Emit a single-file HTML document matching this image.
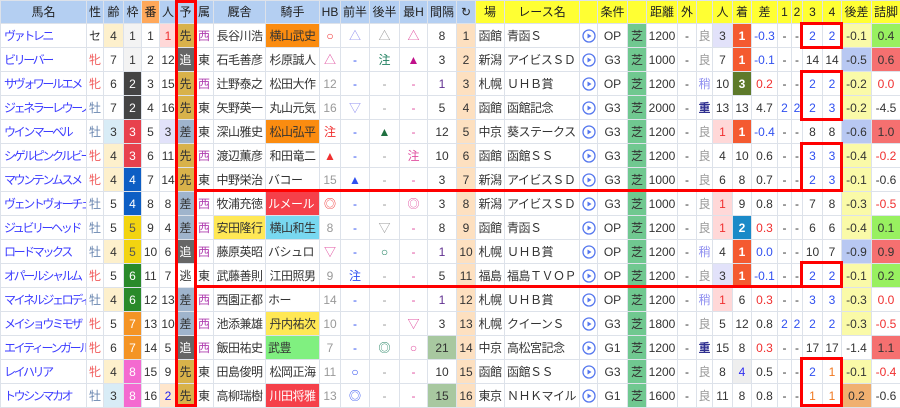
<!DOCTYPE html>
<html><head><meta charset="utf-8">
<style>
*{box-sizing:border-box;margin:0;padding:0}
body{width:900px;height:407px;overflow:hidden;background:#fff;font-family:"Liberation Sans","Noto Sans CJK JP",sans-serif;font-size:12px;color:#333;position:relative}
table{border-collapse:collapse;table-layout:fixed;width:900px}
td,th{border:1px solid #dde2ea;text-align:center;white-space:nowrap;overflow:hidden;padding:0;height:24px;line-height:22px}
th{height:23px;background:#b4cff2;font-weight:normal;color:#222}
th.y{background:#ffff33}
th.o{background:#ffa85a}
td.n{text-align:left;padding-left:3px;color:#3d3dff;letter-spacing:-2.4px}
.cj{letter-spacing:-0.5px}
.f{color:#f05a5a}.m{color:#6a86b0}
.a4{background:#fdf0cc}.a3{background:#d8ecf6}
.w1{background:#f3f3f3}.w2{background:#444;color:#fff}.w3{background:#e8414d;color:#fff}.w4{background:#0d5ec4;color:#fff}.w5{background:#f2d410;color:#555}.w6{background:#2a8a2a;color:#fff}.w7{background:#f49425;color:#fff}.w8{background:#f46ad0;color:#fff}
.p1{background:#ffd8d8;color:#f03030}.p2{background:#ffe6cc;color:#2020f0}.p3{background:#e2e2fa}
.s{background:#d8b24a}.k{background:#666;color:#fff}.z{background:#9fb4cc}
.wst{color:#b040b0}
.jo{background:#fb8c10}.jr{background:#f5404a;color:#fff}.jy{background:#ffe855}.jc{background:#78d8f0}.jg{background:#80f080}
.r{color:#f03030}.pk{color:#e050a0}.bl{color:#3050f0}.gr{color:#208060}.lv{color:#9090f0}.gy{color:#999}.pu{color:#603090}.or{color:#f07820}
.rot{background:#fde0c0}
.ic svg{vertical-align:middle}
.tu{background:#70c890}
.c1{background:#f45a30;color:#fff;font-weight:bold}.c3{background:#5e7a2a;color:#fff;font-weight:bold}.c2{background:#1a8ac8;color:#fff;font-weight:bold}.cg{background:#eee;color:#3030f0}
.ky{background:#fafaa8}.kb{background:#b8c8f2}.ko{background:#f0b070}
.tg{background:#98f060}.tr{background:#f57070}
.ig{background:#a8c8a0}
.b{position:absolute;border:3px solid #f00;pointer-events:none}
td.l{text-align:left;padding-left:2px;letter-spacing:-0.5px}
</style></head><body>
<table>
<colgroup><col style="width:86px"><col style="width:17px"><col style="width:20px"><col style="width:18px"><col style="width:18px"><col style="width:17px"><col style="width:18px"><col style="width:19px"><col style="width:52px"><col style="width:54px"><col style="width:21px"><col style="width:29px"><col style="width:30px"><col style="width:28px"><col style="width:29px"><col style="width:19px"><col style="width:29px"><col style="width:75px"><col style="width:18px"><col style="width:30px"><col style="width:19px"><col style="width:31px"><col style="width:19px"><col style="width:16px"><col style="width:20px"><col style="width:19px"><col style="width:26px"><col style="width:14px"><col style="width:11px"><col style="width:20px"><col style="width:19px"><col style="width:30px"><col style="width:29px"></colgroup>
<tr><th>馬名</th><th>性</th><th>齢</th><th>枠</th><th class="o">番</th><th>人</th><th>予</th><th>属</th><th>厩舎</th><th>騎手</th><th>HB</th><th>前半</th><th>後半</th><th>最H</th><th>間隔</th><th>↻</th><th class="y">場</th><th class="y">レース名</th><th class="y"></th><th class="y">条件</th><th class="y"></th><th class="y">距離</th><th class="y">外</th><th class="y"></th><th class="y">人</th><th class="y">着</th><th class="y">差</th><th class="y">1</th><th class="y">2</th><th class="y">3</th><th class="y">4</th><th class="y">後差</th><th class="y">詰脚</th></tr>

<tr><td class="n">ヴァトレニ</td><td>セ</td><td class="a4">4</td><td class="w1">1</td><td>1</td><td class="p1">1</td><td class="s">先</td><td class="wst">西</td><td class="cj">長谷川浩</td><td class="jo cj">横山武史</td><td class="r">○</td><td class="lv">△</td><td class="gy">△</td><td class="pk">△</td><td>8</td><td class="rot">1</td><td class="cj">函館</td><td class="l">青函Ｓ</td><td class="ic"><svg width="14" height="14"><circle cx="7" cy="7" r="6" fill="none" stroke="#5577ee" stroke-width="1.3"/><path d="M5.5 4.5L9.5 7L5.5 9.5Z" fill="#5577ee"/></svg></td><td>OP</td><td class="tu">芝</td><td>1200</td><td>-</td><td class="gy">良</td><td class="p3">3</td><td class="c1">1</td><td class="bl">-0.3</td><td>-</td><td>-</td><td class="bl">2</td><td class="bl">2</td><td class="ky">-0.1</td><td class="tg">0.4</td></tr>

<tr><td class="n">ビリーバー</td><td class="f">牝</td><td>7</td><td class="w1">1</td><td>2</td><td>12</td><td class="k">追</td><td>東</td><td class="cj">石毛善彦</td><td class="cj">杉原誠人</td><td class="pk">△</td><td class="bl">-</td><td class="gr">注</td><td style="color:#c0108a">▲</td><td>3</td><td class="rot">2</td><td class="cj">新潟</td><td class="l">アイビスＳＤ</td><td class="ic"><svg width="14" height="14"><circle cx="7" cy="7" r="6" fill="none" stroke="#5577ee" stroke-width="1.3"/><path d="M5.5 4.5L9.5 7L5.5 9.5Z" fill="#5577ee"/></svg></td><td>G3</td><td class="tu">芝</td><td>1000</td><td>-</td><td class="gy">良</td><td>7</td><td class="c1">1</td><td class="bl">-0.1</td><td>-</td><td>-</td><td>14</td><td>14</td><td class="kb">-0.5</td><td class="tr">0.6</td></tr>

<tr><td class="n">サヴォワールエメ</td><td class="f">牝</td><td>6</td><td class="w2">2</td><td>3</td><td>15</td><td class="s">先</td><td class="wst">西</td><td class="cj">辻野泰之</td><td class="cj">松田大作</td><td class="gy">12</td><td class="bl">-</td><td class="gy">-</td><td class="pk">-</td><td class="pu">1</td><td class="rot">3</td><td class="cj">札幌</td><td class="l">ＵＨＢ賞</td><td class="ic"><svg width="14" height="14"><circle cx="7" cy="7" r="6" fill="none" stroke="#5577ee" stroke-width="1.3"/><path d="M5.5 4.5L9.5 7L5.5 9.5Z" fill="#5577ee"/></svg></td><td>OP</td><td class="tu">芝</td><td>1200</td><td>-</td><td class="lv">稍</td><td>10</td><td class="c3">3</td><td class="r">0.2</td><td>-</td><td>-</td><td class="bl">2</td><td class="bl">2</td><td class="ky">-0.2</td><td class="r">0.0</td></tr>

<tr><td class="n">ジェネラーレウーノ</td><td class="m">牡</td><td>7</td><td class="w2">2</td><td>4</td><td>16</td><td class="s">先</td><td>東</td><td class="cj">矢野英一</td><td class="cj">丸山元気</td><td class="gy">16</td><td class="lv">▽</td><td class="gy">-</td><td class="pk">-</td><td>5</td><td class="rot">4</td><td class="cj">函館</td><td class="l">函館記念</td><td class="ic"><svg width="14" height="14"><circle cx="7" cy="7" r="6" fill="none" stroke="#5577ee" stroke-width="1.3"/><path d="M5.5 4.5L9.5 7L5.5 9.5Z" fill="#5577ee"/></svg></td><td>G3</td><td class="tu">芝</td><td>2000</td><td>-</td><td style="color:#303090;font-weight:bold">重</td><td>13</td><td>13</td><td>4.7</td><td class="bl">2</td><td class="bl">2</td><td class="bl">2</td><td class="bl">3</td><td class="ky">-0.2</td><td>-4.5</td></tr>

<tr><td class="n">ウインマーベル</td><td class="m">牡</td><td class="a3">3</td><td class="w3">3</td><td>5</td><td class="p3">3</td><td class="z">差</td><td>東</td><td class="cj">深山雅史</td><td class="jo cj">松山弘平</td><td class="r">注</td><td class="bl">-</td><td style="color:#207040">▲</td><td class="pk">-</td><td>12</td><td class="rot">5</td><td class="cj">中京</td><td class="l">葵ステークス</td><td class="ic"><svg width="14" height="14"><circle cx="7" cy="7" r="6" fill="none" stroke="#5577ee" stroke-width="1.3"/><path d="M5.5 4.5L9.5 7L5.5 9.5Z" fill="#5577ee"/></svg></td><td>G3</td><td class="tu">芝</td><td>1200</td><td>-</td><td class="gy">良</td><td class="p1">1</td><td class="c1">1</td><td class="bl">-0.4</td><td>-</td><td>-</td><td>8</td><td>8</td><td class="kb">-0.6</td><td class="tr">1.0</td></tr>

<tr><td class="n">シゲルピンクルビー</td><td class="f">牝</td><td class="a4">4</td><td class="w3">3</td><td>6</td><td>11</td><td class="s">先</td><td class="wst">西</td><td class="cj">渡辺薫彦</td><td class="cj">和田竜二</td><td class="r">▲</td><td class="bl">-</td><td class="gy">-</td><td class="pk">注</td><td>10</td><td class="rot">6</td><td class="cj">函館</td><td class="l">函館ＳＳ</td><td class="ic"><svg width="14" height="14"><circle cx="7" cy="7" r="6" fill="none" stroke="#5577ee" stroke-width="1.3"/><path d="M5.5 4.5L9.5 7L5.5 9.5Z" fill="#5577ee"/></svg></td><td>G3</td><td class="tu">芝</td><td>1200</td><td>-</td><td class="gy">良</td><td>4</td><td>10</td><td>0.6</td><td>-</td><td>-</td><td class="bl">3</td><td class="bl">3</td><td class="ky">-0.4</td><td class="r">-0.2</td></tr>

<tr><td class="n">マウンテンムスメ</td><td class="f">牝</td><td class="a4">4</td><td class="w4">4</td><td>7</td><td>14</td><td class="s">先</td><td>東</td><td class="cj">中野栄治</td><td class="l">バコー</td><td class="gy">15</td><td class="bl">▲</td><td class="gy">-</td><td class="pk">-</td><td>3</td><td class="rot">7</td><td class="cj">新潟</td><td class="l">アイビスＳＤ</td><td class="ic"><svg width="14" height="14"><circle cx="7" cy="7" r="6" fill="none" stroke="#5577ee" stroke-width="1.3"/><path d="M5.5 4.5L9.5 7L5.5 9.5Z" fill="#5577ee"/></svg></td><td>G3</td><td class="tu">芝</td><td>1000</td><td>-</td><td class="gy">良</td><td>6</td><td>8</td><td>0.7</td><td>-</td><td>-</td><td class="bl">2</td><td class="bl">3</td><td class="ky">-0.1</td><td>-0.6</td></tr>

<tr><td class="n">ヴェントヴォーチェ</td><td class="m">牡</td><td>5</td><td class="w4">4</td><td>8</td><td>8</td><td class="z">差</td><td class="wst">西</td><td class="cj">牧浦充徳</td><td class="jr l">ルメール</td><td class="r">◎</td><td class="bl">-</td><td class="gy">-</td><td class="pk">◎</td><td>3</td><td class="rot">8</td><td class="cj">新潟</td><td class="l">アイビスＳＤ</td><td class="ic"><svg width="14" height="14"><circle cx="7" cy="7" r="6" fill="none" stroke="#5577ee" stroke-width="1.3"/><path d="M5.5 4.5L9.5 7L5.5 9.5Z" fill="#5577ee"/></svg></td><td>G3</td><td class="tu">芝</td><td>1000</td><td>-</td><td class="gy">良</td><td class="p1">1</td><td>9</td><td>0.8</td><td>-</td><td>-</td><td>7</td><td>8</td><td class="ky">-0.3</td><td class="r">-0.5</td></tr>

<tr><td class="n">ジュビリーヘッド</td><td class="m">牡</td><td>5</td><td class="w5">5</td><td>9</td><td>4</td><td class="z">差</td><td class="wst">西</td><td class="jy cj">安田隆行</td><td class="jc cj">横山和生</td><td class="gy">8</td><td class="bl">-</td><td class="gy">▽</td><td class="pk">-</td><td>8</td><td class="rot">9</td><td class="cj">函館</td><td class="l">青函Ｓ</td><td class="ic"><svg width="14" height="14"><circle cx="7" cy="7" r="6" fill="none" stroke="#5577ee" stroke-width="1.3"/><path d="M5.5 4.5L9.5 7L5.5 9.5Z" fill="#5577ee"/></svg></td><td>OP</td><td class="tu">芝</td><td>1200</td><td>-</td><td class="gy">良</td><td class="p1">1</td><td class="c2">2</td><td class="r">0.3</td><td>-</td><td>-</td><td>6</td><td>6</td><td class="ky">-0.4</td><td class="tg">0.1</td></tr>

<tr><td class="n">ロードマックス</td><td class="m">牡</td><td class="a4">4</td><td class="w5">5</td><td>10</td><td>6</td><td class="k">追</td><td class="wst">西</td><td class="cj">藤原英昭</td><td class="l">バシュロ</td><td class="pk">▽</td><td class="bl">-</td><td class="gr">○</td><td class="pk">-</td><td class="pu">1</td><td class="rot">10</td><td class="cj">札幌</td><td class="l">ＵＨＢ賞</td><td class="ic"><svg width="14" height="14"><circle cx="7" cy="7" r="6" fill="none" stroke="#5577ee" stroke-width="1.3"/><path d="M5.5 4.5L9.5 7L5.5 9.5Z" fill="#5577ee"/></svg></td><td>OP</td><td class="tu">芝</td><td>1200</td><td>-</td><td class="lv">稍</td><td>4</td><td class="c1">1</td><td class="bl">0.0</td><td>-</td><td>-</td><td>10</td><td>7</td><td class="kb">-0.9</td><td class="tr">0.9</td></tr>

<tr><td class="n">オパールシャルム</td><td class="f">牝</td><td>5</td><td class="w6">6</td><td>11</td><td>7</td><td>逃</td><td>東</td><td class="cj">武藤善則</td><td class="cj">江田照男</td><td class="gy">9</td><td class="bl">注</td><td class="gy">-</td><td class="pk">-</td><td>5</td><td class="rot">11</td><td class="cj">福島</td><td class="l">福島ＴＶＯＰ</td><td class="ic"><svg width="14" height="14"><circle cx="7" cy="7" r="6" fill="none" stroke="#5577ee" stroke-width="1.3"/><path d="M5.5 4.5L9.5 7L5.5 9.5Z" fill="#5577ee"/></svg></td><td>OP</td><td class="tu">芝</td><td>1200</td><td>-</td><td class="gy">良</td><td class="p3">3</td><td class="c1">1</td><td class="bl">-0.1</td><td>-</td><td>-</td><td class="bl">2</td><td class="bl">2</td><td class="ky">-0.1</td><td class="tg">0.2</td></tr>

<tr><td class="n">マイネルジェロディ</td><td class="m">牡</td><td class="a4">4</td><td class="w6">6</td><td>12</td><td>13</td><td class="z">差</td><td class="wst">西</td><td class="cj">西園正都</td><td class="l">ホー</td><td class="gy">14</td><td class="bl">-</td><td class="gy">-</td><td class="pk">-</td><td class="pu">1</td><td class="rot">12</td><td class="cj">札幌</td><td class="l">ＵＨＢ賞</td><td class="ic"><svg width="14" height="14"><circle cx="7" cy="7" r="6" fill="none" stroke="#5577ee" stroke-width="1.3"/><path d="M5.5 4.5L9.5 7L5.5 9.5Z" fill="#5577ee"/></svg></td><td>OP</td><td class="tu">芝</td><td>1200</td><td>-</td><td class="lv">稍</td><td class="p1">1</td><td>6</td><td class="r">0.3</td><td>-</td><td>-</td><td class="bl">3</td><td class="bl">3</td><td class="ky">-0.3</td><td class="r">0.0</td></tr>

<tr><td class="n">メイショウミモザ</td><td class="f">牝</td><td>5</td><td class="w7">7</td><td>13</td><td>10</td><td class="z">差</td><td class="wst">西</td><td class="cj">池添兼雄</td><td class="jy cj">丹内祐次</td><td class="gy">10</td><td class="bl">-</td><td class="gy">-</td><td class="pk">▽</td><td>3</td><td class="rot">13</td><td class="cj">札幌</td><td class="l">クイーンＳ</td><td class="ic"><svg width="14" height="14"><circle cx="7" cy="7" r="6" fill="none" stroke="#5577ee" stroke-width="1.3"/><path d="M5.5 4.5L9.5 7L5.5 9.5Z" fill="#5577ee"/></svg></td><td>G3</td><td class="tu">芝</td><td>1800</td><td>-</td><td class="gy">良</td><td>5</td><td>12</td><td>0.8</td><td class="bl">2</td><td class="bl">2</td><td class="bl">2</td><td class="bl">2</td><td class="ky">-0.3</td><td class="r">-0.5</td></tr>

<tr><td class="n">エイティーンガール</td><td class="f">牝</td><td>6</td><td class="w7">7</td><td>14</td><td>5</td><td class="k">追</td><td class="wst">西</td><td class="cj">飯田祐史</td><td class="jg l">武豊</td><td class="gy">7</td><td class="bl">-</td><td class="gr">◎</td><td class="pk">○</td><td class="ig">21</td><td class="rot">14</td><td class="cj">中京</td><td class="l">高松宮記念</td><td class="ic"><svg width="14" height="14"><circle cx="7" cy="7" r="6" fill="none" stroke="#5577ee" stroke-width="1.3"/><path d="M5.5 4.5L9.5 7L5.5 9.5Z" fill="#5577ee"/></svg></td><td>G1</td><td class="tu">芝</td><td>1200</td><td>-</td><td style="color:#303090;font-weight:bold">重</td><td>15</td><td>8</td><td class="r">0.3</td><td>-</td><td>-</td><td>17</td><td>17</td><td>-1.4</td><td class="tr">1.1</td></tr>

<tr><td class="n">レイハリア</td><td class="f">牝</td><td class="a4">4</td><td class="w8">8</td><td>15</td><td>9</td><td class="s">先</td><td>東</td><td class="cj">田島俊明</td><td class="cj">松岡正海</td><td class="gy">11</td><td class="bl">○</td><td class="gy">-</td><td class="pk">-</td><td>10</td><td class="rot">15</td><td class="cj">函館</td><td class="l">函館ＳＳ</td><td class="ic"><svg width="14" height="14"><circle cx="7" cy="7" r="6" fill="none" stroke="#5577ee" stroke-width="1.3"/><path d="M5.5 4.5L9.5 7L5.5 9.5Z" fill="#5577ee"/></svg></td><td>G3</td><td class="tu">芝</td><td>1200</td><td>-</td><td class="gy">良</td><td>8</td><td class="cg">4</td><td>0.5</td><td>-</td><td>-</td><td class="bl">2</td><td class="or">1</td><td class="ky">-0.1</td><td class="r">-0.4</td></tr>

<tr><td class="n">トウシンマカオ</td><td class="m">牡</td><td class="a3">3</td><td class="w8">8</td><td>16</td><td class="p2">2</td><td class="s">先</td><td>東</td><td class="cj">高柳瑞樹</td><td class="jr cj">川田将雅</td><td class="gy">13</td><td class="bl">◎</td><td class="gy">-</td><td class="pk">-</td><td class="ig">15</td><td class="rot">16</td><td class="cj">東京</td><td class="l">ＮＨＫマイル</td><td class="ic"><svg width="14" height="14"><circle cx="7" cy="7" r="6" fill="none" stroke="#5577ee" stroke-width="1.3"/><path d="M5.5 4.5L9.5 7L5.5 9.5Z" fill="#5577ee"/></svg></td><td>G1</td><td class="tu">芝</td><td>1600</td><td>-</td><td class="gy">良</td><td>11</td><td>8</td><td>0.8</td><td>-</td><td>-</td><td class="or">1</td><td class="or">1</td><td class="ko">0.2</td><td>-0.6</td></tr>
</table>

<div class="b" style="left:175px;top:0;width:22px;height:407px"></div>
<div class="b" style="left:194px;top:189px;width:610px;height:99px;border-right:none"></div>
<div class="b" style="left:800px;top:22px;width:43px;height:27px"></div>
<div class="b" style="left:800px;top:70px;width:43px;height:51px"></div>
<div class="b" style="left:800px;top:142px;width:43px;height:50px"></div>
<div class="b" style="left:800px;top:261px;width:43px;height:27px"></div>
<div class="b" style="left:800px;top:357px;width:43px;height:50px"></div>
</body></html>
